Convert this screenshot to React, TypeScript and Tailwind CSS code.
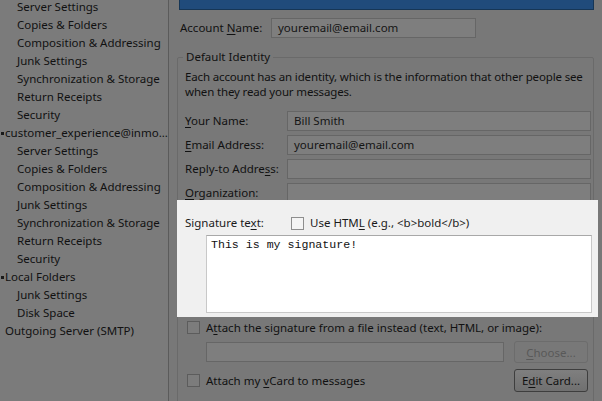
import React from "react";

const sidebar: { label: string; parent?: boolean; noMark?: boolean }[] = [
  { label: "Server Settings" },
  { label: "Copies & Folders" },
  { label: "Composition & Addressing" },
  { label: "Junk Settings" },
  { label: "Synchronization & Storage" },
  { label: "Return Receipts" },
  { label: "Security" },
  { label: "customer_experience@inmo...", parent: true },
  { label: "Server Settings" },
  { label: "Copies & Folders" },
  { label: "Composition & Addressing" },
  { label: "Junk Settings" },
  { label: "Synchronization & Storage" },
  { label: "Return Receipts" },
  { label: "Security" },
  { label: "Local Folders", parent: true },
  { label: "Junk Settings" },
  { label: "Disk Space" },
  { label: "Outgoing Server (SMTP)", parent: true, noMark: true },
];

function Key({ children }: { children: React.ReactNode }) {
  return <span className="underline underline-offset-2">{children}</span>;
}

function Field({ value, className = "" }: { value?: string; className?: string }) {
  return (
    <div
      className={
        "h-[20px] border border-[#666] bg-[#7e7e7e] px-[6px] leading-[18px] text-[#151515] " +
        className
      }
    >
      {value}
    </div>
  );
}

function Check({ light }: { light?: boolean }) {
  return (
    <span
      className={
        light
          ? "inline-block h-[13px] w-[13px] shrink-0 border border-[#8e8e8e] bg-[#f4f4f4]"
          : "inline-block h-[13px] w-[13px] shrink-0 border border-[#5c5c5c] bg-[#7c7c7c]"
      }
    />
  );
}

export default function App() {
  return (
    <div
      className="flex h-[401px] w-[602px] overflow-hidden whitespace-nowrap bg-[#787878] text-[11.5px] text-[#111]"
      style={{ fontFamily: '"Noto Sans", "Open Sans", sans-serif' }}
    >
      {/* account tree */}
      <div className="w-[169px] shrink-0 border-r border-[#5b5b5b] bg-[#7b7b7b]">
        <div className="-mt-[2px]">
          {sidebar.map((item, i) => (
            <div
              key={i}
              className={
                "flex h-[18px] items-center " + (item.parent ? "pl-[5px]" : "pl-[17px]")
              }
            >
              {item.parent && !item.noMark && (
                <span className="-ml-[4px] mr-[1px] inline-block h-[3px] w-[3px] bg-[#1a1a1a]" />
              )}
              {item.label}
            </div>
          ))}
        </div>
      </div>

      {/* settings pane */}
      <div className="flex-1 pl-[8px] pr-[8px]">
        <div className="ml-[2px] h-[10px] border border-t-0 border-[#163656] bg-[#204b7b]" />

        <div className="mt-[8px] flex h-[20px] items-center">
          <span className="w-[94px] pl-[3px]">
            Account <Key>N</Key>ame:
          </span>
          <Field value="youremail@email.com" className="w-[205px]" />
        </div>

        {/* Default Identity group */}
        <div className="relative mt-[19px] h-[400px] rounded-[2px] border border-[#6a6a6a]">
          <div className="absolute -top-[9px] left-[5px] bg-[#787878] px-[3px] leading-[16px]">
            Default Identity
          </div>
          <div className="pl-[7px] pt-[11px] leading-[15px] tracking-[-0.15px]">
            Each account has an identity, which is the information that other people see
            <br />
            when they read your messages.
          </div>

          <div className="mt-[12px] flex flex-col gap-[4px] pl-[7px] pr-[2px]">
            <div className="flex items-center">
              <span className="w-[102px]">
                <Key>Y</Key>our Name:
              </span>
              <Field value="Bill Smith" className="flex-1" />
            </div>
            <div className="flex items-center">
              <span className="w-[102px]">
                <Key>E</Key>mail Address:
              </span>
              <Field value="youremail@email.com" className="flex-1" />
            </div>
            <div className="flex items-center">
              <span className="w-[102px]">
                Reply-to Addre<Key>s</Key>s:
              </span>
              <Field className="flex-1" />
            </div>
            <div className="flex items-center">
              <span className="w-[102px]">
                <Key>O</Key>rganization:
              </span>
              <Field className="flex-1" />
            </div>
          </div>

          {/* highlighted signature block */}
          <div className="relative z-10 -ml-[1px] -mr-[5px] -mt-[3px] h-[117px] bg-[#f0f0f0] pl-[8px] pr-[6px] pt-[15px] text-[#1a1a1a]">
            <div className="flex h-[16px] items-center">
              <span className="w-[106px]">
                Signature te<Key>x</Key>t:
              </span>
              <Check light />
              <span className="ml-[6px]">
                Use HTM<Key>L</Key> (e.g., &lt;b&gt;bold&lt;/b&gt;)
              </span>
            </div>
            <div
              className="ml-[21px] mt-[4px] h-[78px] border border-[#c8c8c8] border-t-[#a8a8a8] bg-white px-[4px] pt-[1px] text-[11.6px] leading-[16px] text-[#111]"
              style={{ fontFamily: '"Liberation Mono", "DejaVu Sans Mono", monospace' }}
            >
              This is my signature!
            </div>
          </div>

          <div className="mt-[2px] flex items-center pl-[9px]">
            <Check />
            <span className="ml-[6px]">
              A<Key>t</Key>tach the signature from a file instead (text, HTML, or image):
            </span>
          </div>
          <div className="mt-[5px] flex items-center pl-[28px] pr-[5px]">
            <Field className="w-[298px]" />
            <div className="ml-auto flex h-[22px] w-[74px] items-center justify-center rounded-[3px] border border-[#6c6c6c] text-[#595959]">
              <Key>C</Key>hoose...
            </div>
          </div>
          <div className="mt-[6px] flex items-center pl-[9px] pr-[5px]">
            <Check />
            <span className="ml-[6px]">
              Attach my <Key>v</Key>Card to messages
            </span>
            <div className="ml-auto flex h-[23px] w-[74px] items-center justify-center rounded-[3px] border border-[#3e3e3e] bg-gradient-to-b from-[#7f7f7f] to-[#707070]">
              E<Key>d</Key>it Card...
            </div>
          </div>
        </div>
      </div>
    </div>
  );
}
